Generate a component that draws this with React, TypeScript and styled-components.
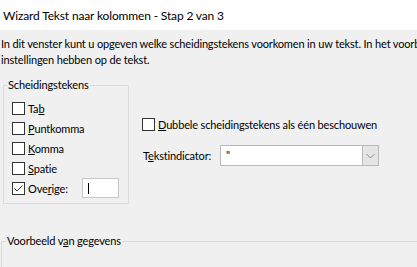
import React from "react";
import styled, { createGlobalStyle } from "styled-components";

const Global = createGlobalStyle`
  html, body { margin: 0; padding: 0; }
  body {
    width: 417px;
    height: 267px;
    overflow: hidden;
    background: #f0f0f0;
    font-family: Lato, "Noto Sans", sans-serif;
    color: #000;
  }
`;

const Window = styled.div`
  width: 417px;
  height: 267px;
  overflow: hidden;
  display: flex;
  flex-direction: column;
  background: #f0f0f0;
`;

const TitleBar = styled.div`
  height: 30px;
  flex: none;
  background: #fff;
  display: flex;
  align-items: center;
  padding-left: 3px;
  font-size: 12px;
  letter-spacing: -0.15px;
  white-space: nowrap;
`;

const Body = styled.div`
  flex: 1;
  display: flex;
  flex-direction: column;
  font-size: 11px;
  letter-spacing: -0.15px;
`;

const Intro = styled.div`
  padding: 6px 0 0 1px;
  line-height: 16px;
  white-space: nowrap;
  overflow: hidden;
`;

const Middle = styled.div`
  display: flex;
  align-items: flex-start;
  margin-top: 9px;
`;

const Group = styled.fieldset<{ $left: number; $legendLeft: number }>`
  margin: 0 0 0 ${(p) => p.$left}px;
  padding: 0;
  border: 1px solid #dcdcdc;
  min-width: 0;

  & > legend {
    margin-left: ${(p) => p.$legendLeft}px;
    padding: 0 1px;
    line-height: 16px;
  }
`;

const DelimGroup = styled(Group)`
  width: 124px;
`;

const SampleGroup = styled(Group)`
  margin-top: 29px;
  width: 440px;
  height: 60px;
`;

const GroupContent = styled.div`
  padding: 5px 0 5px 8px;
`;

const Row = styled.label`
  display: flex;
  align-items: center;
  height: 20px;
  gap: 3px;
  white-space: nowrap;
`;

const Box = styled.span`
  width: 11px;
  height: 11px;
  border: 1px solid #333;
  background: #fff;
  flex: none;
  display: flex;
  align-items: center;
  justify-content: center;
`;

const Key = styled.span`
  text-decoration: underline;
  text-underline-offset: 1px;
`;

const OtherInput = styled.span`
  margin-left: auto;
  margin-right: 9px;
  width: 30px;
  height: 18px;
  border: 1px solid #c8c8c8;
  background: #fff;
  display: flex;
  align-items: center;
  padding-left: 5px;
  box-sizing: content-box;
`;

const Caret = styled.span`
  width: 1px;
  height: 11px;
  background: #000;
`;

const Right = styled.div`
  display: flex;
  flex-direction: column;
  padding-top: 37px;
  margin-left: 13px;
`;

const ComboRow = styled.div`
  display: flex;
  align-items: center;
  margin-top: 11px;
  height: 21px;
  white-space: nowrap;
`;

const ComboLabel = styled.span`
  width: 77px;
  padding-left: 1px;
`;

const Combo = styled.div`
  width: 157px;
  height: 19px;
  border: 1px solid #b9b9b9;
  background: #fff;
  display: flex;
  align-items: stretch;
`;

const ComboValue = styled.span`
  flex: 1;
  padding-left: 5px;
  line-height: 17px;
`;

const ComboButton = styled.span`
  width: 15px;
  background: #e5e5e5;
  border-left: 1px solid #b9b9b9;
  display: flex;
  align-items: center;
  justify-content: center;
`;

const Check = () => (
  <svg width="11" height="11" viewBox="0 0 11 11">
    <path d="M1.5 5.5 L4 8 L9.5 2.5" fill="none" stroke="#333" strokeWidth="1" />
  </svg>
);

const Chevron = () => (
  <svg width="9" height="6" viewBox="0 0 9 6">
    <path d="M0.5 1 L4.5 5 L8.5 1" fill="none" stroke="#858585" strokeWidth="1" />
  </svg>
);

export default function App() {
  return (
    <Window>
      <Global />
      <TitleBar>Wizard Tekst naar kolommen - Stap 2 van 3</TitleBar>
      <Body>
        <Intro>
          <div>
            In dit venster kunt u opgeven welke scheidingstekens voorkomen in uw tekst. In het voorbeeld ziet u welk effect de
          </div>
          <div>instellingen hebben op de tekst.</div>
        </Intro>
        <Middle>
          <DelimGroup $left={3} $legendLeft={3}>
            <legend>Scheidingstekens</legend>
            <GroupContent>
              <Row>
                <Box />
                <span>
                  Ta<Key>b</Key>
                </span>
              </Row>
              <Row>
                <Box />
                <span>
                  <Key>P</Key>untkomma
                </span>
              </Row>
              <Row>
                <Box />
                <span>
                  <Key>K</Key>omma
                </span>
              </Row>
              <Row>
                <Box />
                <span>
                  <Key>S</Key>patie
                </span>
              </Row>
              <Row>
                <Box>
                  <Check />
                </Box>
                <span>
                  Ove<Key>r</Key>ige:
                </span>
                <OtherInput>
                  <Caret />
                </OtherInput>
              </Row>
            </GroupContent>
          </DelimGroup>
          <Right>
            <Row>
              <Box />
              <span>
                <Key>D</Key>ubbele scheidingstekens als één beschouwen
              </span>
            </Row>
            <ComboRow>
              <ComboLabel>
                T<Key>e</Key>kstindicator:
              </ComboLabel>
              <Combo>
                <ComboValue>"</ComboValue>
                <ComboButton>
                  <Chevron />
                </ComboButton>
              </Combo>
            </ComboRow>
          </Right>
        </Middle>
        <SampleGroup $left={1} $legendLeft={4}>
          <legend>
            Voorbeeld v<Key>a</Key>n gegevens
          </legend>
        </SampleGroup>
      </Body>
    </Window>
  );
}
